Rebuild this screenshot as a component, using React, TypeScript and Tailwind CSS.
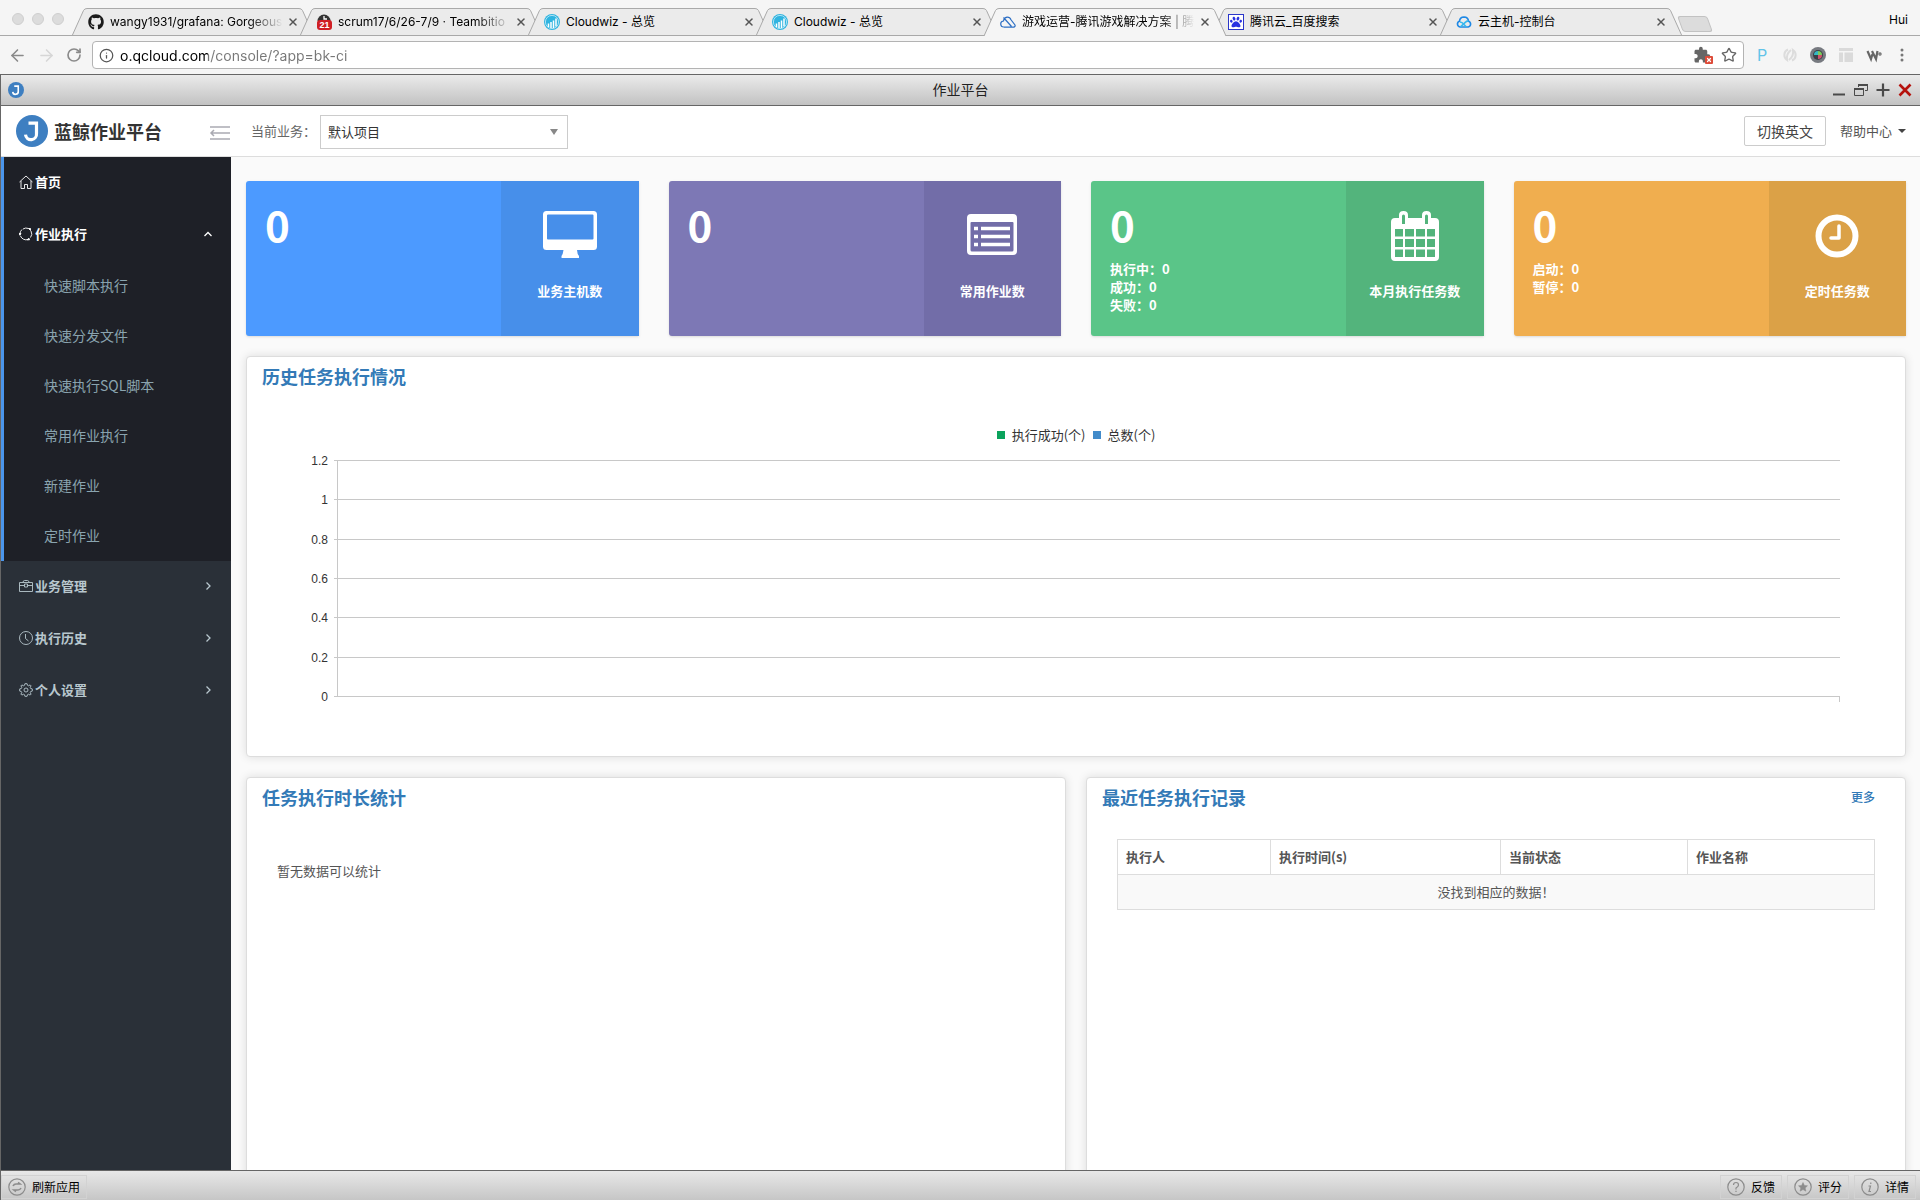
import React, { useState } from 'react';
import { ArrowLeft, ArrowRight, RotateCw, Info, Star, X } from 'lucide-react';
import { FaGithub, FaPaw } from 'react-icons/fa';
import { MdExtension } from 'react-icons/md';
import clsx from 'clsx';

const BarsIcon = () => (
  <svg viewBox="0 0 16 16" className="w-4 h-4">
    <circle cx="8" cy="8" r="8" fill="#2fb4e0" />
    <circle cx="8" cy="8" r="6.6" fill="none" stroke="#c9ecf8" strokeWidth="0.8" />
    <path d="M4.5 13V9.5M7 14V8M9.5 14V6.5M12 12.5V4.5" stroke="#fff" strokeWidth="1.5" />
  </svg>
);

const CalendarBadge = () => (
  <svg viewBox="0 0 16 16" className="w-4 h-4">
    <path d="M1.5 7a6.500 6.500 0 0 1 13 0z" fill="#333" />
    <path d="M8 2V5h3" stroke="#fff" strokeWidth="1.3" fill="none" />
    <rect x="1" y="6" width="15" height="10" rx="3" fill="#d01f24" />
    <text x="8.5" y="14" fontSize="9" fontWeight="700" textAnchor="middle" fill="#fff" fontFamily="Liberation Sans, sans-serif">21</text>
  </svg>
);

const CloudOutline = () => (
  <svg viewBox="0 0 16 16" className="w-4 h-4" fill="none" stroke="#2d6fc4" strokeWidth="1.2">
    <path d="M4 13a3 3 0 0 1-.5-6A4.5 4.5 0 0 1 7 3.2a4 4 0 0 1 4 2.6L15 11a1.6 1.6 0 0 1-1.3 2.2H4M3.5 3.5l8 9" />
  </svg>
);

const CloudBlue = () => (
  <svg viewBox="0 0 16 16" className="w-4 h-4" fill="none" strokeWidth="1.6">
    <path d="M4 13a3 3 0 0 1-.5-5.8A4.6 4.6 0 0 1 8 3a4.6 4.6 0 0 1 4.5 4.2A3 3 0 0 1 12.2 13z" stroke="#1e88e5" />
    <path d="M4.5 12.8L9.5 8.2a3 3 0 0 1 3-1M4 8q2 0 4 2.5l2.5 2.5" stroke="#35b8ee" />
  </svg>
);

const PawIcon = () => (
  <span className="flex w-4 h-4 items-center justify-center border border-[#2a35c9] bg-white">
    <FaPaw className="w-3 h-3 text-[#2932e1]" />
  </span>
);

const tabs = [
  { title: 'wangy1931/grafana: Gorgeous', icon: <FaGithub className="w-4 h-4 text-[#1b1b1b]" />, fade: true },
  { title: 'scrum17/6/26-7/9 · Teambitio', icon: <CalendarBadge />, fade: true },
  { title: 'Cloudwiz - 总览', icon: <BarsIcon /> },
  { title: 'Cloudwiz - 总览', icon: <BarsIcon /> },
  { title: '游戏运营-腾讯游戏解决方案 | 腾', icon: <CloudOutline />, active: true, fade: true },
  { title: '腾讯云_百度搜索', icon: <PawIcon /> },
  { title: '云主机-控制台', icon: <CloudBlue /> },
];

const jobLinks = ['快速脚本执行', '快速分发文件', '快速执行SQL脚本', '常用作业执行', '新建作业', '定时作业'];

const yTicks = ['1.2', '1', '0.8', '0.6', '0.4', '0.2', '0'];

function JLogo({ className }: { className: string }) {
  return (
    <svg viewBox="0 0 32 32" className={className}>
      <circle cx="16" cy="16" r="16" fill="#3e7fc1" />
      <path d="M12.5 8.2h8v10.3a5.5 5.5 0 0 1-11 1.2" fill="none" stroke="#fff" strokeWidth="3.2" />
    </svg>
  );
}

function BrowserTabs() {
  return (
    <div className="flex h-9 items-end bg-[#f5f5f5] shadow-[inset_0_-1px_0_#a9a9a9]">
      <div className="flex w-[72px] shrink-0 gap-2 pl-3 pb-[11px]">
        <span className="w-3 h-3 rounded-full border border-[#cfcfcf] bg-[#dcdcdc]"></span>
        <span className="w-3 h-3 rounded-full border border-[#cfcfcf] bg-[#dcdcdc]"></span>
        <span className="w-3 h-3 rounded-full border border-[#cfcfcf] bg-[#dcdcdc]"></span>
      </div>
      <div role="tablist" className="flex min-w-0">
        {tabs.map((tab, i) => (
          <div key={i} role="tab" aria-selected={!!tab.active} className={clsx('relative flex h-7 w-[242px] min-w-0 items-center -mr-[14px] pl-4 pr-[15px]', tab.active && 'z-10')}>
            <svg viewBox="0 0 242 28" preserveAspectRatio="none" className="absolute inset-0 w-full h-full">
              <path d="M0 28L11.5 2.5Q12.500 0.5 15 0.5H227Q229.5 0.5 230.5 2.5L242 28" fill={tab.active ? '#f5f5f5' : '#ebebeb'} stroke="#a9a9a9" />
              {!tab.active && <path d="M0 27.5H242" stroke="#a9a9a9" />}
            </svg>
            <span className="relative shrink-0">{tab.icon}</span>
            <span className={clsx('relative ml-1.5 flex-1 overflow-hidden whitespace-nowrap text-[12px] leading-4 text-black', tab.fade && 'mask-r-from-80%')}>{tab.title}</span>
            <button aria-label="关闭标签页" className="relative ml-1 shrink-0 text-[#555]"><X size={12} strokeWidth={3} /></button>
          </div>
        ))}
      </div>
      <button aria-label="新标签页" className="ml-3 mb-1 h-4 w-[30px] skew-x-[20deg] rounded-[3px] border border-[#c2c2c2] bg-[#dcdcdc]"></button>
      <span className="ml-auto pr-3 pb-2 text-[12px] leading-4 text-black">Hui</span>
    </div>
  );
}

function AddressBar() {
  return (
    <div className="flex h-[38px] items-center bg-[#f5f5f5] pr-2.5">
      <button aria-label="后退" className="ml-2 text-[#8a8a8a]"><ArrowLeft size={19} /></button>
      <button aria-label="前进" className="ml-2.5 text-[#d6d6d6]"><ArrowRight size={19} /></button>
      <button aria-label="刷新" className="ml-2.5 text-[#8a8a8a]"><RotateCw size={16} strokeWidth={2.5} /></button>
      <div className="ml-2.5 flex h-7 flex-1 items-center rounded-[4px] border border-[#b3b3b3] bg-white px-1.5">
        <Info size={15} className="text-[#555]" />
        <input
          aria-label="地址"
          defaultValue="o.qcloud.com/console/?app=bk-ci"
          className="ml-1.5 flex-1 bg-linear-to-r from-black from-[88px] to-[#777] to-[88px] bg-clip-text text-[14px] text-transparent caret-black outline-none"
        />
        <span className="relative mr-2.5">
          <MdExtension className="w-[18px] h-[18px] text-[#666]" />
          <span className="absolute -right-0.5 bottom-0 flex h-2 w-2 items-center justify-center rounded-[1px] bg-[#dd4b39] text-white"><X size={6} strokeWidth={5} /></span>
        </span>
        <button aria-label="收藏" className="text-[#666]"><Star size={16} /></button>
      </div>
      <div className="ml-2.5 flex items-center gap-3">
        <span className="flex w-4 justify-center text-[16px] leading-4 text-[#62c3e8]">P</span>
        <svg viewBox="0 0 16 16" className="w-4 h-4" fill="none" stroke="#dcdcdc" strokeWidth="2">
          <path d="M6 2.500a6 6 0 0 0-1 10.500Q4 7 9 3M10 13.500a6 6 0 0 0 1-10.500Q12 9 7 13" />
        </svg>
        <svg viewBox="0 0 16 16" className="w-4 h-4">
          <circle cx="8" cy="8" r="8" fill="#777a80" />
          <circle cx="8" cy="8" r="5" fill="#3b3f47" />
          <path d="M8 4a4 4 0 0 1 4 4H8z" fill="#7acb5c" />
          <path d="M4 8a4 4 0 0 1 4-4v4z" fill="#36b8c5" />
          <path d="M8 12a4 4 0 0 0 4-4H8z" fill="#d4526e" />
        </svg>
        <svg viewBox="0 0 16 16" className="w-4 h-4" fill="#dadada">
          <path d="M1 1h14v3H1zM1 5.5h4V15H1zM6.5 5.5H15V15H6.5z" />
        </svg>
        <svg viewBox="0 0 16 16" className="w-4 h-4" fill="none" stroke="#666" strokeWidth="2.2">
          <path d="M1.5 4L5 12 6.500 7M6 4l4 8 1.500-8" />
          <circle cx="14" cy="7" r="0.6" />
        </svg>
        <button aria-label="菜单" className="flex w-4 justify-center">
          <svg viewBox="0 0 4 16" className="h-4" fill="#777"><circle cx="2" cy="3" r="1.5" /><circle cx="2" cy="8" r="1.5" /><circle cx="2" cy="13" r="1.5" /></svg>
        </button>
      </div>
    </div>
  );
}

function TitleBar() {
  return (
    <div className="relative flex h-8 items-center justify-between border-y border-[#666] bg-linear-to-b from-[#ebebeb] to-[#c2c2c2] pl-[7px] pr-2">
      <JLogo className="w-4 h-4" />
      <h1 className="absolute inset-x-0 pb-0.5 text-center text-[14px] leading-5 text-[#222]">作业平台</h1>
      <div className="relative flex items-center gap-2 text-[#4a4a4a]">
        <button aria-label="最小化">
          <svg viewBox="0 0 14 14" className="w-3.5 h-3.5"><path d="M1 11.5h12" stroke="currentColor" strokeWidth="2" /></svg>
        </button>
        <button aria-label="还原">
          <svg viewBox="0 0 14 14" className="w-3.5 h-3.5" fill="none" stroke="currentColor">
            <path d="M4.5 4V1.5h9v6H11" /><path d="M4 2h10" strokeWidth="2" />
            <path d="M0.5 5.5h9v7h-9z" /><path d="M0 6h10" strokeWidth="2" />
          </svg>
        </button>
        <button aria-label="最大化">
          <svg viewBox="0 0 14 14" className="w-3.5 h-3.5"><path d="M7 0.5v13M0.5 7h13" stroke="currentColor" strokeWidth="2.2" /></svg>
        </button>
        <button aria-label="关闭" className="text-[#b5120d]">
          <svg viewBox="0 0 14 14" className="w-3.5 h-3.5"><path d="M1.5 1.5l11 11M12.5 1.5l-11 11" stroke="currentColor" strokeWidth="2.6" /></svg>
        </button>
      </div>
    </div>
  );
}

function Header() {
  return (
    <header className="flex h-[51px] items-center border-b border-[#ddd] bg-white pl-[15px] pr-3.5">
      <JLogo className="w-8 h-8" />
      <span className="ml-1.5 text-[18px] leading-6 font-bold text-[#333]">蓝鲸作业平台</span>
      <button aria-label="收起菜单" className="ml-[47px] pt-1">
        <svg viewBox="0 0 22 16" className="w-[22px] h-4" fill="none" stroke="#aaaab2" strokeWidth="1.5">
          <path d="M1 2h20M7 8h14M1 14h20M5 5L2 8l3 3M2 8h5" />
        </svg>
      </button>
      <label htmlFor="biz" className="ml-5 text-[13px] leading-5 text-[#666]">当前业务：</label>
      <div className="relative ml-1 pt-0.5">
        <select id="biz" className="h-[34px] w-[248px] appearance-none border border-[#ccc] bg-white px-[7px] text-[13px] text-[#333]">
          <option>默认项目</option>
        </select>
        <svg viewBox="0 0 8 6" className="pointer-events-none absolute right-2.5 top-4 w-2 h-1.5" fill="#888"><path d="M0 0h8L4 6z" /></svg>
      </div>
      <button className="ml-auto h-[30px] border border-[#ccc] rounded-[2px] px-3 text-[14px] leading-5 text-[#444]">切换英文</button>
      <button className="ml-3.5 flex items-center gap-1.5 text-[13px] leading-5 text-[#555]">
        帮助中心
        <svg viewBox="0 0 8 4" className="w-2 h-1" fill="#444"><path d="M0 0h8L4 4z" /></svg>
      </button>
    </header>
  );
}

function MenuRow({ icon, label, open, onClick, active }: { icon: React.ReactNode; label: string; open?: boolean; onClick?: () => void; active?: boolean }) {
  return (
    <button onClick={onClick} className={clsx('flex h-[52px] w-full items-center pb-0.5 pr-[18px] text-[13px] leading-5 font-bold', active ? 'pl-[15px] text-white' : 'pl-[18px] text-[#b8c7ce]')}>
      <svg viewBox="0 0 14 14" className="w-3.5 h-3.5" fill="none" stroke="currentColor" strokeWidth="0.9">{icon}</svg>
      <span className="ml-0.5">{label}</span>
      {open !== undefined && (
        <svg viewBox="0 0 10 10" className="ml-auto w-2.5 h-2.5" fill="none" stroke="currentColor" strokeWidth="1.3">
          <path d={open ? 'M1.5 7L5 3.5 8.5 7' : 'M3.5 1.5L7 5 3.5 8.5'} />
        </svg>
      )}
    </button>
  );
}

function Sidebar() {
  const [open, setOpen] = useState(true);

  return (
    <nav className="w-[230px] shrink-0 bg-[#2a3038]">
      <div className="border-l-[3px] border-[#4b96ec] bg-[#1e2027]">
        <MenuRow active label="首页" icon={<path d="M0.5 7L7 1l6.5 6M2 6v7.500h3.500V9.500h3v4H12V6" />} />
        <MenuRow
          active
          label="作业执行"
          open={open}
          onClick={() => setOpen(!open)}
          icon={<><path d="M4 2a6 6 0 0 1 5.500-.5M12 4a6 6 0 0 1-.5 6.500M9 12.500A6 6 0 0 1 1.500 9M1 6.500A6 6 0 0 1 3 2.500" /><path d="M9.500 1.500h2v2zM8 12.800l2-1.500.5 1.500zM0 6.500h2l-1 1.800z" fill="currentColor" /></>}
        />
        {open && jobLinks.map(link => (
          <a key={link} href="#" className="flex h-[50px] items-center pb-0.5 pl-10 text-[14px] leading-5 text-[#8aa4af]">{link}</a>
        ))}
      </div>
      <MenuRow label="业务管理" open={false} icon={<path d="M0.5 3.500h13v9H0.5zM4 3.500Q4 1.500 5.500 1.500h3Q10 1.500 10 3.500M0.5 6.500h4.500M9 6.500h4.500M5.500 5h3v3h-3z" />} />
      <MenuRow label="执行历史" open={false} icon={<><circle cx="7" cy="7" r="6.5" /><path d="M6.500 3v4.500L9.500 10" /></>} />
      <MenuRow label="个人设置" open={false} icon={<><circle cx="7" cy="7" r="2" /><path d="M5.900 0.700L8.100 0.700 8.500 2.300 9.700 2.800 11.100 1.900 12.100 2.900 11.200 4.300 11.700 5.500 13.300 5.900 13.300 8.100 11.700 8.500 11.200 9.700 12.100 11.100 11.100 12.100 9.700 11.200 8.500 11.700 8.100 13.300 5.900 13.300 5.500 11.700 4.300 11.200 2.900 12.100 1.900 11.100 2.800 9.700 2.300 8.500 0.700 8.100 0.700 5.900 2.300 5.500 2.800 4.300 1.900 2.900 2.900 1.900 4.300 2.800 5.500 2.300z" /></>} />
    </nav>
  );
}

function StatCard({ label, icon, main, side, lines = [] }: { label: string; icon: React.ReactNode; main: string; side: string; lines?: string[] }) {
  return (
    <div className={clsx('flex h-[155px] rounded-l-[3px] text-white shadow-sm', main)}>
      <div className="w-[65%] pl-[19px] pt-5">
        <div className="h-[59px] text-[42px] leading-[46px] font-bold">0</div>
        {lines.map(line => <p key={line} className="text-[13px] leading-[18px] font-bold">{line}</p>)}
      </div>
      <div className={clsx('flex w-[35%] flex-col items-center pt-7', side)}>
        <svg viewBox="0 0 56 54" className="w-14 h-[54px]">{icon}</svg>
        <span className="mt-[18px] text-[13px] leading-5 font-bold">{label}</span>
      </div>
    </div>
  );
}

const desktopIcon = (
  <path fill="#fff" fillRule="evenodd" d="M4.500 2h47Q55 2 55 5.500v32Q55 41 51.500 41H35q.2 4 2 6v1.500q0 .5-.5.5H20q-.5 0-.5-.5V47q1.500-2 2-6H4.500Q1 41 1 37.500v-32Q1 2 4.500 2zM6 5.500Q5 5.500 5 6.500v23q0 1 1 1h44.500q1 0 1-1v-23q0-1-1-1z" />
);

const listIcon = (
  <>
    <path fill="#fff" fillRule="evenodd" d="M7 5h42q4 0 4 4v33q0 4-4 4H7q-4 0-4-4V9q0-4 4-4zM7.500 13q-1 0-1 1v27q0 1.500 1.500 1.500h40q1.500 0 1.500-1.500V14q0-1-1-1z" />
    <path stroke="#fff" strokeWidth="3.500" d="M10 19.500h4M10 27.500h4M10 35.500h4M17 19.500h29M17 27.500h29M17 35.500h29" />
  </>
);

const calendarIcon = (
  <path fill="#fff" fillRule="evenodd" d="M8 9h4V6q0-4 4.500-4T21 6v3h14V6q0-4 4.500-4T44 6v3h4q4 0 4 4v35q0 4-4 4H8q-4 0-4-4V13q0-4 4-4zM15 7v8h3V7q0-1.500-1.500-1.500T15 7zm23 0v8h3V7q0-1.500-1.500-1.500T38 7zM8 20v7.500h8V20zm10 0v7.500h9V20zm11 0v7.500h9V20zm11 0v7.500h8V20zM8 30v8h8v-8zm10 0v8h9v-8zm11 0v8h9v-8zm11 0v8h8v-8zM8 40.500v7.500h8v-7.500zm10 0v7.500h9v-7.500zm11 0v7.500h9v-7.500zm11 0v7.500h8v-7.500z" />
);

const clockIcon = (
  <>
    <circle cx="28" cy="27" r="18.500" fill="none" stroke="#fff" strokeWidth="6" />
    <path d="M30 17v12h-8" fill="none" stroke="#fff" strokeWidth="3.500" strokeLinecap="round" strokeLinejoin="round" />
  </>
);

function Panel({ title, extra, className, children }: { title: string; extra?: React.ReactNode; className?: string; children: React.ReactNode }) {
  return (
    <section className={clsx('rounded-[4px] border border-[#ddd] bg-white shadow-[0_0_10px_rgba(0,0,0,0.12)]', className)}>
      <div className="flex h-[38px] items-center justify-between pl-[15px] pr-[30px]">
        <h2 className="text-[18px] leading-6 font-bold text-[#337ab7]">{title}</h2>
        {extra}
      </div>
      {children}
    </section>
  );
}

function HistoryChart() {
  return (
    <div className="pl-3.5 pr-[65px]">
      <div className="-mr-[51px] mt-[30px] flex justify-center gap-[7px] text-[13px] leading-5 text-[#333]">
        <span className="flex items-center gap-[7px]"><i className="w-2 h-2 bg-[#0ba35c]"></i>执行成功(个)</span>
        <span className="flex items-center gap-[7px]"><i className="w-2 h-2 bg-[#428bca]"></i>总数(个)</span>
      </div>
      <svg className="mt-[5px] h-[260px] w-full">
        {yTicks.map((tick, i) => {
          const y = 10.5 + Math.round(i * 39.33);
          return (
            <g key={tick}>
              <text x="67" y={y + 4} textAnchor="end" fontSize="12" fill="#333" fontFamily="Liberation Sans, sans-serif">{tick}</text>
              <line x1="73" x2="100%" y1={y} y2={y} stroke="#c8c8c8" />
            </g>
          );
        })}
        <line x1="76.5" x2="76.5" y1="10" y2="247" stroke="#c8c8c8" />
        <line x1="100%" x2="100%" y1="246" y2="252" stroke="#c8c8c8" strokeWidth="2" />
      </svg>
    </div>
  );
}

function RecordTable() {
  return (
    <div className="px-[30px] pt-[23px]">
      <table className="w-full table-fixed border-collapse border border-[#ddd] text-[13px] leading-5 text-[#555]">
        <thead>
          <tr className="h-[35px] text-left">
            <th className="w-[153px] border border-[#ddd] px-2 font-bold">执行人</th>
            <th className="border border-[#ddd] px-2 font-bold">执行时间(s)</th>
            <th className="w-[187px] border border-[#ddd] px-2 font-bold">当前状态</th>
            <th className="w-[187px] border border-[#ddd] px-2 font-bold">作业名称</th>
          </tr>
        </thead>
        <tbody>
          <tr className="h-[35px] bg-[#f9f9f9]">
            <td colSpan={4} className="px-2 text-center">没找到相应的数据！</td>
          </tr>
        </tbody>
      </table>
    </div>
  );
}

function FooterButton({ label, children }: { label: string; children: React.ReactNode }) {
  return (
    <button className="flex h-6 items-center gap-1.5 border border-[#d2d2d2] px-1.5 text-[12px] leading-4 text-black">
      <svg viewBox="0 0 18 18" className="w-[18px] h-[18px]" fill="none" stroke="#8c8c8c" strokeWidth="1.2">
        <circle cx="9" cy="9" r="8.2" />
        {children}
      </svg>
      {label}
    </button>
  );
}

export default function App() {
  return (
    <div className="flex h-screen flex-col overflow-hidden bg-[#fafafa] font-['Noto_Sans_CJK_SC',sans-serif]">
      <div className="font-[Inter,'Noto_Sans_CJK_SC',sans-serif]">
        <BrowserTabs />
        <AddressBar />
      </div>
      <div className="flex min-h-0 flex-1 flex-col border-l border-[#666]">
        <TitleBar />
        <Header />
        <div className="flex min-h-0 flex-1">
          <Sidebar />
          <main className="min-w-0 flex-1 overflow-hidden pl-[15px] pr-3.5 pt-6">
            <div className="grid grid-cols-4 gap-[30px]">
              <StatCard label="业务主机数" icon={desktopIcon} main="bg-[#4c9aff]" side="bg-[#478fea]" />
              <StatCard label="常用作业数" icon={listIcon} main="bg-[#7d78b5]" side="bg-[#726da8]" />
              <StatCard label="本月执行任务数" icon={calendarIcon} main="bg-[#5ac588]" side="bg-[#53b47c]" lines={['执行中：0', '成功：0', '失败：0']} />
              <StatCard label="定时任务数" icon={clockIcon} main="bg-[#f0ae4f]" side="bg-[#dba147]" lines={['启动：0', '暂停：0']} />
            </div>
            <Panel title="历史任务执行情况" className="mt-5 h-[401px]">
              <HistoryChart />
            </Panel>
            <div className="mt-5 grid grid-cols-2 gap-5">
              <Panel title="任务执行时长统计" className="h-[430px]">
                <p className="px-[30px] pt-[45px] text-[13px] leading-5 text-[#555]">暂无数据可以统计</p>
              </Panel>
              <Panel title="最近任务执行记录" className="h-[430px]" extra={<a href="#" className="text-[12px] leading-5 font-medium text-[#337ab7]">更多</a>}>
                <RecordTable />
              </Panel>
            </div>
          </main>
        </div>
        <footer className="relative flex h-[30px] shrink-0 items-center gap-[5px] border-t border-[#666] bg-linear-to-b from-[#e8e8e8] to-[#c6c6c6] pt-0.5 pr-1">
          <FooterButton label="刷新应用"><path d="M5 8q1-2 3-2h4l-2-1.500M13 10q-1 2-3 2H6l2 1.500" strokeWidth="1.600" /></FooterButton>
          <span className="flex-1"></span>
          <FooterButton label="反馈"><path d="M6.500 7Q6.500 4.500 9 4.500T11.500 7Q11.500 8.500 9 10v1.500M9 12.800v1.200" /></FooterButton>
          <FooterButton label="评分"><path d="M9 4.500l1.400 3 3.100.3-2.300 2.200.7 3.200L9 11.600l-2.900 1.600.7-3.200-2.300-2.200 3.100-.3z" fill="#8c8c8c" strokeWidth="0.500" /></FooterButton>
          <FooterButton label="详情"><path d="M7.500 8h2L8 13.500h2M9.800 4.500v1.500" /></FooterButton>
        </footer>
      </div>
    </div>
  );
}
